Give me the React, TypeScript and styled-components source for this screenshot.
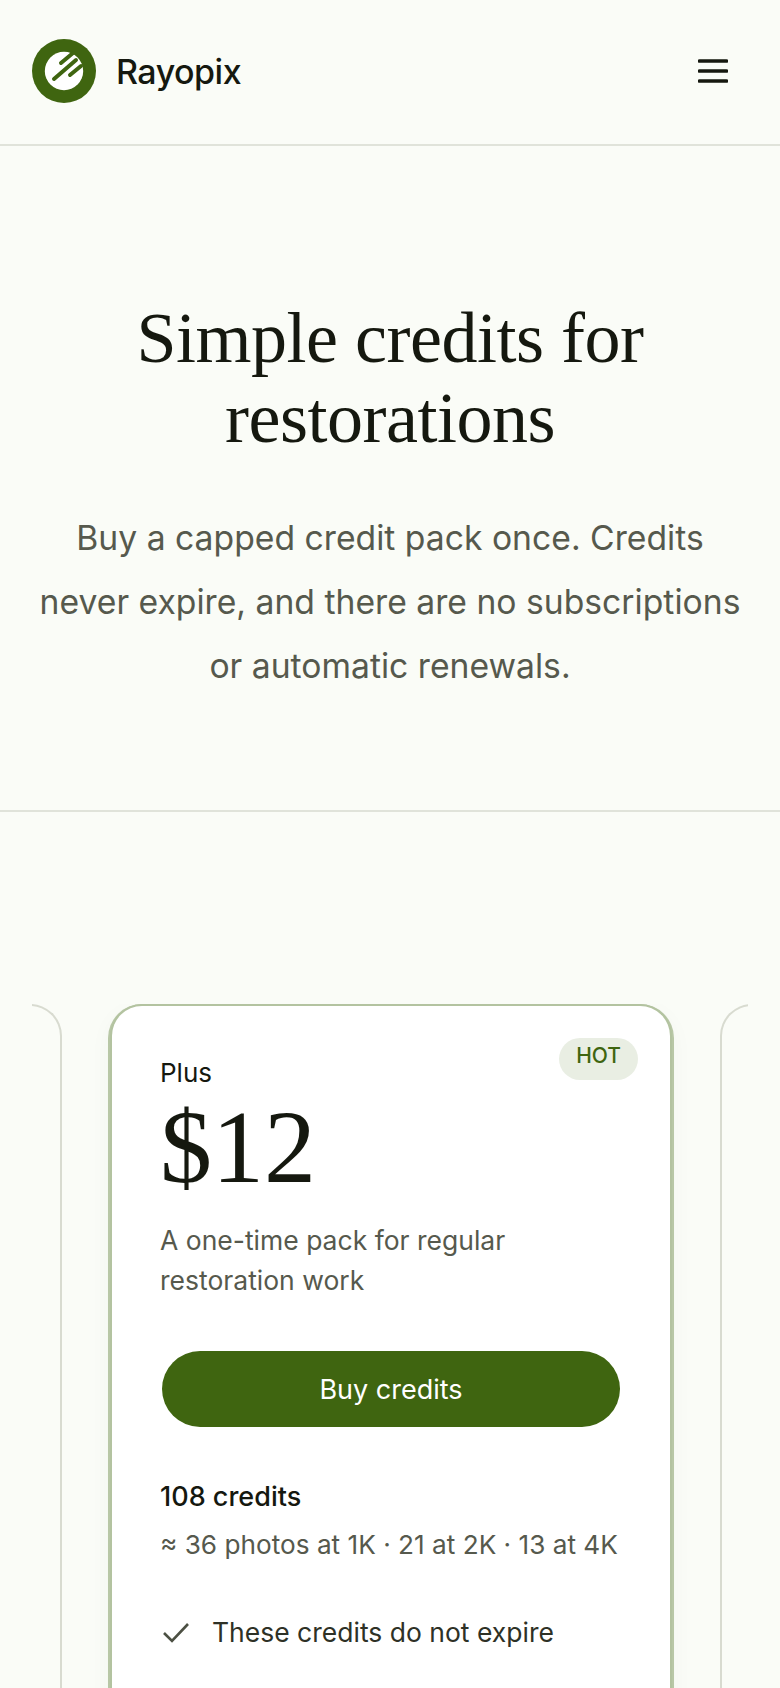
import styled, { createGlobalStyle } from 'styled-components'

const GlobalStyle = createGlobalStyle`
  html, body {
    margin: 0;
    background: #fafcf7;
    height: 1688px;
    overflow: hidden;
  }
  * { box-sizing: border-box; }
`

const sans = `Inter, "Noto Sans", sans-serif`
const serif = `"Liberation Serif", serif`

const Page = styled.div`
  width: 780px;
  font-family: ${sans};
  color: #15180f;
`

const Header = styled.header`
  height: 146px;
  padding: 0 52px 2px 32px;
  border-bottom: 2px solid #e0e3da;
  display: flex;
  align-items: center;
  justify-content: space-between;
`

const Brand = styled.div`
  display: flex;
  align-items: center;
  gap: 20px;
`

const BrandName = styled.span`
  font-size: 34px;
  font-weight: 500;
  letter-spacing: -0.5px;
`

const MenuButton = styled.button`
  border: 0;
  padding: 0;
  background: none;
  display: flex;
  color: #15180f;
`

const Hero = styled.section`
  height: 666px;
  padding: 152px 32px 0;
  border-bottom: 2px solid #e0e3da;
  text-align: center;
`

const Title = styled.h1`
  margin: 0;
  font-family: ${serif};
  font-weight: 400;
  font-size: 72px;
  line-height: 80px;
  letter-spacing: -0.5px;
`

const Lead = styled.p`
  margin: 48px 0 0;
  font-size: 33.7px;
  line-height: 64px;
  color: #56594d;
`

const Carousel = styled.section`
  margin: 192px 32px 0;
  padding-left: 2px;
  display: flex;
  justify-content: center;
  gap: 48px;
  overflow: hidden;
`

const Card = styled.article<{ $featured?: boolean }>`
  flex: none;
  width: 562px;
  height: 800px;
  padding: 48px 48px 0;
  position: relative;
  border: 2px solid ${p => (p.$featured ? '#b3c3a0' : '#d8dbd0')};
  border-bottom: 0;
  border-radius: 32px 32px 0 0;
  background: ${p => (p.$featured ? '#ffffff' : 'transparent')};
  box-shadow: ${p => (p.$featured ? '0 2px 0 2px #b8c7a6, 0 8px 24px rgba(60, 80, 20, 0.04)' : 'none')};
`

const Badge = styled.span`
  position: absolute;
  top: 32px;
  right: 32px;
  padding: 0 17px;
  height: 42px;
  border-radius: 21px;
  background: #e9eee3;
  color: #3f6510;
  font-size: 21px;
  font-weight: 500;
  line-height: 36px;
`

const PlanName = styled.div`
  margin-top: 3px;
  font-size: 26px;
  line-height: 32px;
`

const Price = styled.div`
  margin-top: 6px;
  font-family: ${serif};
  font-size: 104px;
  line-height: 104px;
`

const Blurb = styled.p`
  margin: 21px 0 0;
  font-size: 26.5px;
  line-height: 40px;
  color: #56594d;
`

const BuyButton = styled.button`
  display: block;
  width: 458px;
  height: 76px;
  margin: 51px 0 0 2px;
  border: 0;
  border-radius: 38px;
  background: #3f6510;
  color: #fff;
  font-family: ${sans};
  font-size: 27px;
`

const Credits = styled.div`
  margin-top: 52px;
  font-size: 27px;
  line-height: 36px;
  font-weight: 450;
`

const Estimate = styled.div`
  margin-top: 12px;
  font-size: 26.2px;
  line-height: 36px;
  color: #56594d;
`

const Feature = styled.div`
  margin-top: 51px;
  display: flex;
  align-items: center;
  gap: 20px;
  font-size: 26.5px;
  line-height: 36px;
  color: #2e3126;
`

const Check = styled.svg`
  flex: none;
  color: #4c5043;
`

export default function App() {
  return (
    <Page>
      <GlobalStyle />
      <Header>
        <Brand>
          <svg width="64" height="64" viewBox="0 0 64 64">
            <circle cx="32" cy="32" r="32" fill="#3f6510" />
            <circle cx="32" cy="32" r="19.2" fill="#fff" />
            <path d="M22 40 L44 21 M38 36 L49 27 M29 24 L41 14" stroke="#3f6510" strokeWidth="4" strokeLinecap="round" />
          </svg>
          <BrandName>Rayopix</BrandName>
        </Brand>
        <MenuButton aria-label="Menu">
          <svg width="30" height="24" viewBox="0 0 30 24">
            <path d="M1.5 2 H28.5 M1.5 12 H28.5 M1.5 22 H28.5" stroke="currentColor" strokeWidth="3.6" strokeLinecap="round" />
          </svg>
        </MenuButton>
      </Header>
      <Hero>
        <Title>Simple credits for restorations</Title>
        <Lead>Buy a capped credit pack once. Credits never expire, and there are no subscriptions or automatic renewals.</Lead>
      </Hero>
      <Carousel>
        <Card />
        <Card $featured>
          <Badge>HOT</Badge>
          <PlanName>Plus</PlanName>
          <Price>$12</Price>
          <Blurb>A one-time pack for regular restoration work</Blurb>
          <BuyButton>Buy credits</BuyButton>
          <Credits>108 credits</Credits>
          <Estimate>≈ 36 photos at 1K · 21 at 2K · 13 at 4K</Estimate>
          <Feature>
            <Check width="32" height="32" viewBox="0 0 32 32">
              <path d="M4 17 L12 25 L28 8" fill="none" stroke="currentColor" strokeWidth="2.6" />
            </Check>
            These credits do not expire
          </Feature>
        </Card>
        <Card />
      </Carousel>
    </Page>
  )
}
